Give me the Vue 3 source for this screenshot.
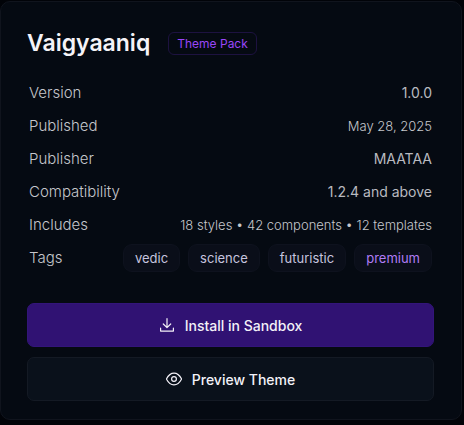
<template>
  <div class="theme-card">
    <header class="card-header">
      <h1 class="title">Vaigyaaniq</h1>
      <span class="badge">Theme Pack</span>
    </header>

    <dl class="details">
      <div v-for="item in details" :key="item.label" class="row">
        <dt>{{ item.label }}</dt>
        <dd :class="{ small: item.small }">{{ item.value }}</dd>
      </div>
      <div class="row">
        <dt>Tags</dt>
        <dd class="tags">
          <span
            v-for="tag in tags"
            :key="tag"
            class="tag"
            :class="{ premium: tag === 'premium' }"
          >{{ tag }}</span>
        </dd>
      </div>
    </dl>

    <div class="actions">
      <button type="button" class="btn btn-install">
        <svg class="icon" viewBox="0 0 16 16" aria-hidden="true">
          <path d="M8 1.5v9M4.3 7 8 10.6 11.7 7M1.6 11.2v2.9h12.8v-2.9" />
        </svg>
        Install in Sandbox
      </button>
      <button type="button" class="btn btn-preview">
        <svg class="icon" viewBox="0 0 16 16" aria-hidden="true">
          <path d="M.4 8C2.3 4.300 4.900 2.100 8 2.100S13.700 4.300 15.600 8c-1.900 3.700-4.500 5.900-7.600 5.900S2.300 11.700 .4 8z" />
          <circle cx="8" cy="8" r="2.4" />
        </svg>
        Preview Theme
      </button>
    </div>
  </div>
</template>

<script setup>
const details = [
  { label: 'Version', value: '1.0.0' },
  { label: 'Published', value: 'May 28, 2025', small: true },
  { label: 'Publisher', value: 'MAATAA' },
  { label: 'Compatibility', value: '1.2.4 and above' },
  { label: 'Includes', value: '18 styles • 42 components • 12 templates', small: true }
]

const tags = ['vedic', 'science', 'futuristic', 'premium']
</script>

<style>
body {
  background: #010308;
}
</style>

<style scoped>
.theme-card {
  box-sizing: border-box;
  margin: 1px 2px 4px 0;
  padding: 28px 27px 18px 26px;
  border: 1px solid #10141d;
  border-radius: 10px;
  background: #050a12;
  color: #c6c7cc;
  font-family: Inter, "Liberation Sans", sans-serif;
}

.card-header {
  display: flex;
  align-items: center;
  gap: 18px;
  margin-bottom: 20px;
}

.title {
  margin: 0;
  color: #f5f3f8;
  font-size: 23px;
  font-weight: 600;
  line-height: 26px;
}

.badge {
  padding: 0 8px;
  border: 1px solid #1d1240;
  border-radius: 6px;
  color: #9a46f8;
  font-size: 12px;
  line-height: 21px;
}

.details {
  margin: 0 2px 29px;
}

.row {
  display: flex;
  justify-content: space-between;
  align-items: center;
  height: 33px;
}

.row dt {
  font-size: 15px;
  font-weight: 300;
}

.row dd {
  margin: 0;
  color: #b9bac0;
  font-size: 14px;
}

.row .small {
  color: #c6c7cc;
  font-size: 13px;
  font-weight: 300;
}

.row .tags {
  display: flex;
  gap: 8px;
}

.tag {
  padding: 0 11px;
  border: 1px solid #0e121e;
  border-radius: 9px;
  background: #0a0e19;
  color: #c6c4df;
  font-size: 13px;
  line-height: 26px;
}

.premium {
  color: #b07cf5;
}

.actions {
  display: flex;
  flex-direction: column;
  gap: 10px;
}

.btn {
  display: flex;
  justify-content: center;
  align-items: center;
  gap: 10px;
  width: 100%;
  height: 44px;
  padding: 0;
  border: 1px solid #141a24;
  border-radius: 7px;
  background: #0a111b;
  color: #f3f1f8;
  font-family: inherit;
  font-size: 14px;
  font-weight: 500;
  cursor: pointer;
}

.btn-install {
  border-color: #33157a;
  background: #301273;
}

.icon {
  width: 16px;
  height: 16px;
  fill: none;
  stroke: currentColor;
  stroke-width: 1.2;
  stroke-linecap: round;
  stroke-linejoin: round;
}
</style>
